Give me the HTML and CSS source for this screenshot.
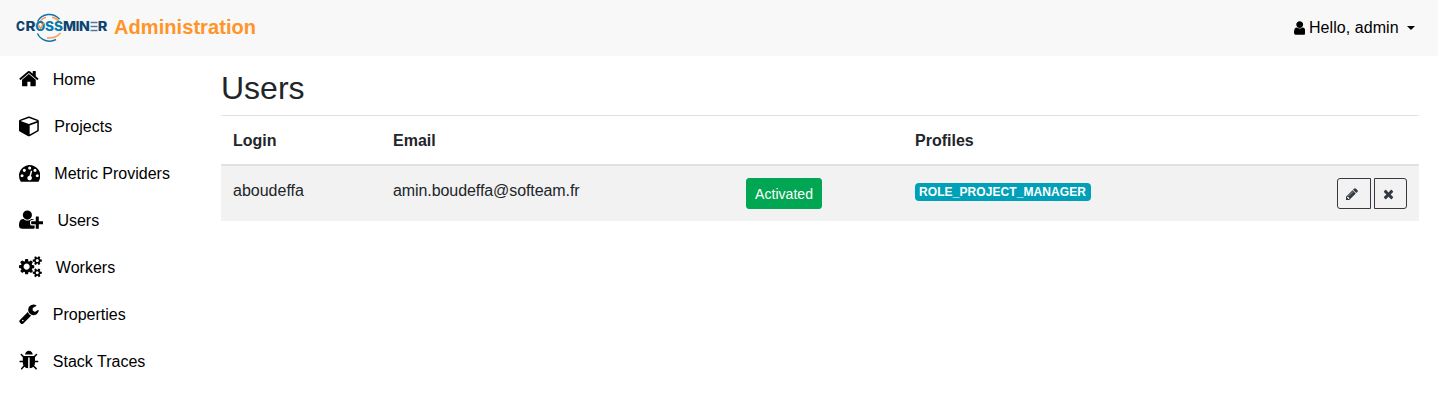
FILE: index.html
```html
<!DOCTYPE html>
<html lang="en">
<head>
<meta charset="utf-8">
<title>Administration</title>
<link rel="stylesheet" href="styles.css">
</head>
<body>
<header class="navbar">
  <a class="brand">
    <svg class="logo" width="92" height="30" viewBox="0 0 92 30">
      <g fill="none">
        <path stroke="#0f75a8" stroke-width="1.500" d="M21.500 8.500A13.300 13.300 0 0 1 43.500 6.300M21.500 20.500A13.300 13.300 0 0 0 40 26.500"/>
        <path stroke="#ff9a55" stroke-width="1.400" d="M24.500 8Q26.500 5 30 4.300M36 4.300Q41 5.500 43.500 9M31 25Q40 25.500 44.500 20"/>
      </g>
      <g class="logo-text" fill="#0e4370">
        <text x="0" y="18" textLength="9" lengthAdjust="spacingAndGlyphs">C</text>
        <text x="9.600" y="18" textLength="10" lengthAdjust="spacingAndGlyphs">R</text>
        <g fill="#087aad">
          <text x="19.200" y="18" textLength="10" lengthAdjust="spacingAndGlyphs">O</text>
          <text x="29" y="18" textLength="9" lengthAdjust="spacingAndGlyphs">S</text>
          <text x="38" y="18" textLength="9" lengthAdjust="spacingAndGlyphs">S</text>
        </g>
        <text x="47" y="18" textLength="13" lengthAdjust="spacingAndGlyphs">M</text>
        <text x="59.800" y="18">I</text>
        <text x="63" y="18" textLength="10.800" lengthAdjust="spacingAndGlyphs">N</text>
        <text x="81.700" y="18" textLength="9.600" lengthAdjust="spacingAndGlyphs">R</text>
      </g>
      <path stroke="#53769a" stroke-width="1.400" d="M74.500 9.500h7M74.500 13.500h7M74.500 17.500h7"/>
      <path fill="none" stroke="#ff8a3c" stroke-width="1.400" d="M22 11.500l2.500 4 3.500-6"/>
    </svg>
    <span class="brand-name">Administration</span>
  </a>
  <a class="account">
    <svg class="icon-user" viewBox="256 0 1280 1792"><path d="M1536 1399q0 109-62.5 187t-150.5 78h-854q-88 0-150.5-78t-62.5-187q0-85 8.5-160.5t31.5-152 58.5-131 94-89 134.5-34.5q131 128 313 128t313-128q76 0 134.5 34.500t94 89 58.500 131 31.500 152 8.500 160.500zm-256-887q0 159-112.500 271.500t-271.500 112.500-271.500-112.500-112.500-271.500 112.500-271.500 271.500-112.500 271.500 112.500 112.500 271.500z"/></svg>
    <span class="greeting">Hello, admin</span>
    <span class="caret"></span>
  </a>
</header>
<div class="layout">
  <nav class="sidebar">
    <a class="item"><svg class="w1664" viewBox="0 0 1664 1792"><path d="M1408 992v480q0 26-19 45t-45 19H960v-384H704v384H320q-26 0-45-19t-19-45V992q0-1 .5-3t.5-3l575-474 575 474q1 2 1 6zm223-69l-62 74q-8 9-21 11h-3q-13 0-21-7L832 424l-692 577q-12 8-24 7-13-2-21-11l-62-74q-8-10-7-23.500T37 878l719-599q32-26 76-26t76 26l244 204V288q0-14 9-23t23-9h192q14 0 23 9t9 23v408l219 182q10 8 11 21.500t-7 23.500z"/></svg><span>Home</span></a>
    <a class="item"><svg class="w1792" viewBox="0 0 1792 1792"><path d="M896 1629l640-349v-636l-640 233v752zm-64-865l698-254-698-254-698 254zm832-252v768q0 35-18 65t-49 47l-704 384q-28 16-61 16t-61-16l-704-384q-31-17-49-47t-18-65v-768q0-40 23-73t61-47l704-256q22-8 44-8t44 8l704 256q38 14 61 47t23 73z"/></svg><span>Projects</span></a>
    <a class="item"><svg class="w1792" viewBox="0 0 1792 1792"><path d="M384 1152q0-53-37.500-90.500t-90.500-37.500-90.500 37.500-37.500 90.500 37.500 90.500 90.500 37.500 90.500-37.500 37.500-90.500zm192-448q0-53-37.500-90.500t-90.500-37.500-90.500 37.500-37.500 90.500 37.500 90.500 90.500 37.500 90.500-37.500 37.500-90.500zm428 481l101-382q6-26-7.500-48.500t-38.500-29.500-48 6.500-30 39.500l-101 382q-60 5-107 43.500t-63 98.500q-20 77 20 146t117 89 146-20 89-117q16-60-6-117t-72-91zm660-33q0-53-37.500-90.500t-90.500-37.500-90.500 37.500-37.500 90.500 37.500 90.500 90.500 37.500 90.500-37.500 37.500-90.500zm-640-640q0-53-37.500-90.500t-90.500-37.500-90.500 37.500-37.500 90.500 37.500 90.500 90.500 37.500 90.500-37.500 37.500-90.500zm448 192q0-53-37.500-90.500t-90.500-37.500-90.500 37.500-37.500 90.500 37.500 90.500 90.500 37.500 90.500-37.500 37.500-90.500zm320 448q0 261-141 483-19 29-54 29h-1402q-35 0-54-29-141-221-141-483 0-182 71-348t191-286 286-191 348-71 348 71 286 191 191 286 71 348z"/></svg><span>Metric Providers</span></a>
    <a class="item"><svg class="w2048" viewBox="0 0 2048 1792"><path d="M704 896q-159 0-271.500-112.500T320 512t112.500-271.500T704 128t271.500 112.500T1088 512 975.500 783.500 704 896zm960 128h352q13 0 22.500 9.500t9.500 22.500v192q0 13-9.500 22.500t-22.500 9.500h-352v352q0 13-9.500 22.500t-22.500 9.500h-192q-13 0-22.500-9.500t-9.500-22.500v-352h-352q-13 0-22.500-9.500t-9.500-22.500v-192q0-13 9.500-22.500t22.500-9.500h352v-352q0-13 9.500-22.500t22.500-9.500h192q13 0 22.500 9.500t9.500 22.500v352zm-736 224q0 52 38 90t90 38h256v238q-68 50-171 50H267q-121 0-194-69T0 1405q0-53 3.500-103.500t14-109T44 1084t43-97.500 62-81 85.500-53.500T346 832q19 0 39 17 79 61 154.500 91.500T704 971t164.500-30.500T1023 849q20-17 39-17 132 0 217 96h-223q-52 0-90 38t-38 90v192z"/></svg><span>Users</span></a>
    <a class="item"><svg class="w1920" viewBox="0 0 1920 1792"><path d="M896 896q0-106-75-181t-181-75-181 75-75 181 75 181 181 75 181-75 75-181zm768 512q0-52-38-90t-90-38-90 38-38 90q0 53 37.500 90.500t90.500 37.500 90.500-37.500 37.500-90.500zm0-1024q0-52-38-90t-90-38-90 38-38 90q0 53 37.500 90.500t90.500 37.500 90.500-37.500 37.500-90.500zm-384 421v185q0 10-7 19.500t-16 10.500l-155 24q-11 35-32 76 34 48 90 115 7 11 7 20 0 12-7 19-23 30-82.500 89.500t-78.500 59.500q-11 0-21-7l-115-90q-37 19-77 31-11 108-23 155-7 24-30 24h-186q-11 0-20-7.500t-10-17.500l-23-153q-34-10-75-31l-118 89q-7 7-20 7-11 0-21-8-144-133-144-160 0-9 7-19 10-14 41-53t47-61q-23-44-35-82l-152-24q-10-1-17-9.500t-7-19.500v-185q0-10 7-19.500t16-10.500l155-24q11-35 32-76-34-48-90-115-7-11-7-20 0-12 7-20 22-30 82-89t79-59q11 0 21 7l115 90q34-18 77-32 11-108 23-154 7-24 30-24h186q11 0 20 7.500t10 17.500l23 153q34 10 75 31l118-89q8-7 20-7 11 0 21 8 144 133 144 160 0 8-7 19-12 16-42 54t-45 60q23 48 34 82l152 23q10 2 17 10.500t7 19.500zm640 533v140q0 16-149 31-12 27-30 52 51 113 51 138 0 4-4 7-122 71-124 71-8 0-46-47t-52-68q-20 2-30 2t-30-2q-14 21-52 68t-46 47q-2 0-124-71-4-3-4-7 0-25 51-138-18-25-30-52-149-15-149-31v-140q0-16 149-31 13-29 30-52-51-113-51-138 0-4 4-7 4-2 35-20t59-34 30-16q8 0 46 46.500t52 67.500q20-2 30-2t30 2q51-71 92-112l6-2q4 0 124 70 4 3 4 7 0 25-51 138 17 23 30 52 149 15 149 31zm0-1024v140q0 16-149 31-12 27-30 52 51 113 51 138 0 4-4 7-122 71-124 71-8 0-46-47t-52-68q-20 2-30 2t-30-2q-14 21-52 68t-46 47q-2 0-124-71-4-3-4-7 0-25 51-138-18-25-30-52-149-15-149-31v-140q0-16 149-31 13-29 30-52-51-113-51-138 0-4 4-7 4-2 35-20t59-34 30-16q8 0 46 46.500t52 67.500q20-2 30-2t30 2q51-71 92-112l6-2q4 0 124 70 4 3 4 7 0 25-51 138 17 23 30 52 149 15 149 31z"/></svg><span>Workers</span></a>
    <a class="item"><svg class="w1664" viewBox="0 0 1664 1792"><path d="M384 1472q0-26-19-45t-45-19-45 19-19 45 19 45 45 19 45-19 19-45zm644-420l-682 682q-37 37-90 37-52 0-91-37L59 1626q-38-36-38-90 0-53 38-91l681-681q39 98 114.500 173.500T1028 1052zm634-435q0 39-23 106-47 134-164.500 217.500T1216 1024q-185 0-316.500-131.500T768 576t131.500-316.500T1216 128q58 0 121.500 16.500T1445 191q16 11 16 28t-16 28l-293 169v224l193 107q5-3 79-48.500t135.500-81T1630 582q15 0 23.500 10t8.500 25z"/></svg><span>Properties</span></a>
    <a class="item"><svg class="w1664" viewBox="0 0 1664 1792"><path d="M1632 960q0 26-19 45t-45 19h-224q0 171-67 290l208 209q19 19 19 45t-19 45q-18 19-45 19t-45-19l-198-197q-5 5-15 13t-42 28.500-65 36.500-82 29-97 13V640H768v896q-51 0-101.500-13.500t-87-33-66-39T468.500 1418l-15-14-183 207q-20 21-48 21-24 0-43-16-19-18-20.500-44.500T174 1526l202-227q-58-114-58-275H96q-26 0-45-19t-19-45 19-45 45-19h224V602L147 429q-19-19-19-45t19-45 45-19 45 19l173 173h844l173-173q19-19 45-19t45 19 19 45-19 45l-173 173v294h224q26 0 45 19t19 45zM1152 384H512q0-133 93.500-226.500T832 64t226.500 93.500T1152 384z"/></svg><span>Stack Traces</span></a>
  </nav>
  <main class="content">
    <h2 class="title">Users</h2>
    <table class="table">
      <colgroup><col class="c-login"><col class="c-email"><col class="c-state"><col class="c-profiles"><col></colgroup>
      <thead><tr><th>Login</th><th>Email</th><th></th><th>Profiles</th><th></th></tr></thead>
      <tbody>
        <tr>
          <td class="text">aboudeffa</td>
          <td class="text email">amin.boudeffa@softeam.fr</td>
          <td><button class="btn btn-success">Activated</button></td>
          <td><span class="badge">ROLE_PROJECT_MANAGER</span></td>
          <td>
            <div class="actions">
              <button class="btn btn-edit"><svg class="i-pencil" viewBox="0 0 1536 1792"><path d="M363 1536l91-91-235-235-91 91v107h128v128h107zm523-928q0-22-22-22-10 0-17 7l-542 542q-7 7-7 17 0 22 22 22 10 0 17-7l542-542q7-7 7-17zm-54-192l416 416-832 832H0v-416zm683 96q0 53-37 90l-166 166-416-416 166-165q36-38 90-38 53 0 91 38l235 234q37 39 37 91z"/></svg></button>
              <button class="btn btn-delete"><svg class="i-times" viewBox="0 0 1408 1792"><path d="M1298 1322q0 40-28 68l-136 136q-28 28-68 28t-68-28l-294-294-294 294q-28 28-68 28t-68-28l-136-136q-28-28-28-68t28-68l294-294-294-294q-28-28-28-68t28-68l136-136q28-28 68-28t68 28l294 294 294-294q28-28 68-28t68 28l136 136q28 28 28 68t-28 68l-294 294 294 294q28 28 28 68z"/></svg></button>
            </div>
          </td>
        </tr>
      </tbody>
    </table>
  </main>
</div>
</body>
</html>
```
FILE: styles.css
```css
* { box-sizing: border-box; }
body {
  margin: 0;
  background: #fff;
  color: #212529;
  font: 16px/24px "Liberation Sans", Arial, sans-serif;
}
svg { display: block; flex: none; fill: currentColor; }
.navbar {
  display: flex;
  justify-content: space-between;
  align-items: center;
  height: 56px;
  padding: 0 23px 0 16px;
  background: #f8f8f8;
}
.brand { display: flex; align-items: center; gap: 6px; }
.logo { overflow: visible; }
.logo-text { font: 800 12.500px Inter, sans-serif; }
.brand-name {
  margin-top: -2px;
  color: #ff9428;
  font-size: 20px;
  font-weight: 700;
  line-height: 30px;
  letter-spacing: .07px;
}
.account { display: flex; align-items: center; color: #000; }
.icon-user { width: 11.430px; height: 16px; margin: -1px 4px 0 0; }
.greeting { width: 90px; white-space: nowrap; letter-spacing: .06px; }
.caret {
  margin: -1px 0 0 8px;
  border-top: 4.800px solid;
  border-right: 4.800px solid transparent;
  border-left: 4.800px solid transparent;
}
.layout { display: flex; }
.sidebar { width: 221px; padding-left: 19px; color: #000; }
.item { display: flex; align-items: center; gap: 14px; height: 47px; }
.item svg { height: 21.330px; margin-top: -1px; }
.w1664 { width: 19.810px; }
.w1792 { width: 21.330px; }
.w1920 { width: 22.860px; }
.w2048 { width: 24.380px; }
.content { width: 1198px; padding-top: 13px; }
.title { margin: 0 0 8px; font-size: 32px; font-weight: 500; line-height: 38px; }
.table { width: 100%; table-layout: fixed; border-spacing: 0; }
.c-login { width: 160px; }
.c-email { width: 353px; }
.c-state { width: 169px; }
.c-profiles { width: 280px; }
th, td { padding: 12px; vertical-align: top; text-align: left; }
th { padding: 13px 12px 11px; border-top: 1px solid #dee2e6; border-bottom: 2px solid #dee2e6; }
td { background: #f2f2f2; }
.text { padding-top: 13px; }
.email { letter-spacing: -.08px; }
.btn {
  display: flex;
  align-items: center;
  height: 31px;
  margin: 0;
  padding: 0 8px;
  border: 1px solid #343a40;
  border-radius: 3px;
  background: transparent;
  color: #343a40;
  font: 14px/21px "Liberation Sans", Arial, sans-serif;
}
.btn-success { padding-top: 2px; border-color: #00a651; background: #00a651; color: #fff; letter-spacing: .05px; }
.badge {
  display: block;
  width: 176px;
  margin-top: 5px;
  padding: 3px 4px;
  border-radius: 4px;
  background: #00a1b8;
  color: #fff;
  font-size: 12px;
  font-weight: 700;
  line-height: 12px;
  letter-spacing: .08px;
}
.actions { display: flex; justify-content: flex-end; gap: 3px; }
.btn-edit { width: 34px; border-radius: 3px 0 0 3px; }
.btn-delete { width: 33px; border-radius: 0 3px 3px 0; }
.i-pencil { width: 12px; height: 14px; }
.i-times { width: 11px; height: 14px; }
```
